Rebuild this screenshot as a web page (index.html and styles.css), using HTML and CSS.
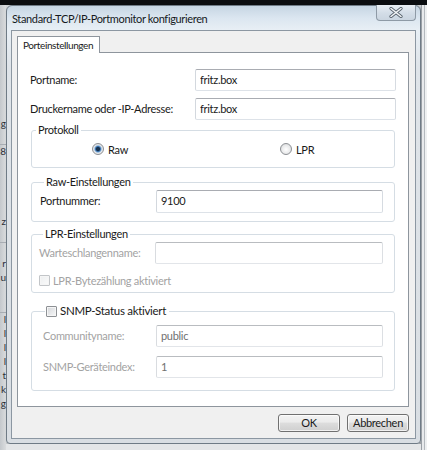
FILE: index.html
```html
<!DOCTYPE html>
<html lang="de">
<head>
<meta charset="utf-8">
<title>Standard-TCP/IP-Portmonitor konfigurieren</title>
<link rel="stylesheet" href="styles.css">
</head>
<body>
<div class="desk">
  <div class="topband"></div>
  <div class="leftstrip">
    <div class="li"></div><div class="li"></div><div class="li"></div><div class="li"></div>
    <div class="li"></div><div class="li"></div><div class="li"></div><div class="li"></div>
    <div class="li">g</div><div class="li sep"></div><div class="li">8</div><div class="li"></div>
    <div class="li"></div><div class="li"></div><div class="li"></div><div class="li">z</div>
    <div class="li sep"></div><div class="li"></div><div class="li">r</div><div class="li">u</div>
    <div class="li"></div><div class="li sep"></div><div class="li">l</div><div class="li">l</div>
    <div class="li">l</div><div class="li">l</div><div class="li">t</div><div class="li">k</div>
    <div class="li">g</div><div class="li"></div><div class="li"></div>
  </div>

  <div class="window">
    <div class="titlebar">
      <span class="title">Standard-TCP/IP-Portmonitor konfigurieren</span>
      <button class="close" type="button" aria-label="Schließen">
        <svg width="14" height="11" viewBox="0 0 14 11"><path d="M2 1.5 L12 9.5 M12 1.5 L2 9.5" stroke="#55606b" stroke-width="3.2" stroke-linecap="round"/><path d="M2 1.5 L12 9.5 M12 1.5 L2 9.5" stroke="#f4f6f8" stroke-width="1.6" stroke-linecap="round"/></svg>
      </button>
    </div>

    <div class="client">
      <div class="tabs"><div class="tab">Porteinstellungen</div></div>

      <div class="panel">
        <div class="row first">
          <label class="lbl">Portname:</label>
          <input class="field" type="text" value="fritz.box" spellcheck="false">
        </div>
        <div class="row">
          <label class="lbl">Druckername oder -IP-Adresse:</label>
          <input class="field" type="text" value="fritz.box" spellcheck="false">
        </div>

        <fieldset class="group g-proto">
          <legend>Protokoll</legend>
          <div class="radio-row">
            <label class="opt"><input type="radio" name="p" class="radio" checked> Raw</label>
            <label class="opt"><input type="radio" name="p" class="radio"> LPR</label>
          </div>
        </fieldset>

        <fieldset class="group g-raw">
          <legend>Raw-Einstellungen</legend>
          <div class="grow">
            <label class="lbl">Portnummer:</label>
            <input class="field tall" type="text" value="9100" spellcheck="false">
          </div>
        </fieldset>

        <fieldset class="group g-lpr">
          <legend>LPR-Einstellungen</legend>
          <div class="grow">
            <label class="lbl dis">Warteschlangenname:</label>
            <input class="field off" type="text" value="" readonly>
          </div>
          <label class="check dis"><input type="checkbox" class="box off" disabled> LPR-Bytezählung aktiviert</label>
        </fieldset>

        <fieldset class="group g-snmp">
          <legend><label class="check"><input type="checkbox" class="box"> SNMP-Status aktiviert</label></legend>
          <div class="grow wide">
            <label class="lbl dis">Communityname:</label>
            <input class="field off" type="text" value="public" readonly spellcheck="false">
          </div>
          <div class="grow wide second">
            <label class="lbl dis">SNMP-Geräteindex:</label>
            <input class="field off" type="text" value="1" readonly spellcheck="false">
          </div>
        </fieldset>
      </div>

      <div class="buttons">
        <button class="btn" type="button">OK</button>
        <button class="btn" type="button">Abbrechen</button>
      </div>
    </div>
  </div>

  <div class="rightstrip"></div>
  <div class="bottomstrip"></div>
</div>
</body>
</html>
```

FILE: styles.css
```css
* { box-sizing: border-box; }
html, body { margin: 0; padding: 0; }
body {
  width: 427px;
  height: 450px;
  overflow: hidden;
  background: #cfd3d6;
  font-family: Lato, "Open Sans", sans-serif;
  font-size: 11px;
  letter-spacing: -0.3px;
  color: #1a1a1a;
}
.desk {
  display: grid;
  grid-template-columns: 6px 415px 6px;
  grid-template-rows: 5px 439px 6px;
  width: 427px;
  height: 450px;
}
.topband { grid-column: 1 / 4; grid-row: 1; background: #0b0d10; }
.leftstrip {
  grid-column: 1; grid-row: 2 / 4;
  background: linear-gradient(90deg, #c4c8cc, #dadcde);
  overflow: hidden;
  display: flex; flex-direction: column;
}
.li {
  height: 14px; flex: none;
  display: flex; justify-content: flex-end;
  font-size: 10px; line-height: 13px; color: #2b2f36; letter-spacing: 0;
}
.li.sep { border-bottom: 1px solid #a8adb3; }
.rightstrip { grid-column: 3; grid-row: 2 / 4; background: linear-gradient(90deg, #9aa0a6 0 1px, #e8eaec 1px 3px, #b3b8bd 3px 4px, #eef0f1 4px); }
.bottomstrip { grid-column: 2; grid-row: 3; background: #e4e6e8; }

.window {
  grid-column: 2; grid-row: 2;
  display: flex; flex-direction: column;
  border: 1px solid #6f7b86;
  border-radius: 6px 6px 4px 4px;
  padding: 0 4px 4px 4px;
  background: linear-gradient(180deg, #c6d5e3 0px, #dbe6f0 12px, #e8eff5 24px, #dfe4e9 60px, #d9dee3 100%);
  box-shadow: 1px 1px 2px rgba(0,0,0,.35);
}
.titlebar {
  height: 24px; flex: none;
  display: flex; align-items: flex-start; justify-content: space-between;
}
.title {
  padding: 5px 0 0 1px;
  font-size: 11px; letter-spacing: -0.35px; color: #15191d; line-height: 16px;
}
.close {
  width: 40px; height: 16px;
  margin: -1px 0 0 0;
  padding: 0;
  border: 1px solid #8e9aa6;
  border-top: none;
  border-radius: 0 0 4px 4px;
  background: linear-gradient(180deg, #e8eef4, #d3dde7 55%, #cad5e0);
  display: flex; align-items: center; justify-content: center;
}

.client {
  flex: 1;
  display: flex; flex-direction: column;
  border: 1px solid #8c97a2;
  background: #f0f0f0;
  padding: 5px 6px 6px 5px;
}
.tabs { display: flex; flex: none; }
.tab {
  width: 83px; height: 17px;
  border: 1px solid #8e959d; border-bottom: none;
  background: #fff;
  padding: 0 0 0 5px;
  font-size: 10px; letter-spacing: -0.4px; line-height: 16px;
  white-space: nowrap;
  position: relative; z-index: 1;
}
.panel {
  flex: 1;
  margin-top: -1px;
  border: 1px solid #8e959d;
  background: #fff;
  padding: 16px 12px 0 12px;
}
.row {
  display: grid; grid-template-columns: 165px 1fr;
  align-items: center;
  height: 22px;
  margin-top: 7px;
}
.row.first { margin-top: 0; }
.lbl { white-space: nowrap; padding-bottom: 2px; }
.lbl.dis, .check.dis { color: #a3a3a3; }
.field {
  height: 22px; width: 100%;
  border: 1px solid;
  border-color: #a9acb2 #d6dbe1 #dde2e8 #d3d8de;
  border-radius: 2px;
  background: #fff;
  font: inherit; letter-spacing: inherit; color: #1a1a1a;
  padding: 0 4px 2px 4px;
  outline: none;
}
.field.tall { height: 23px; }
.field.off { color: #707070; border-color: #b9bcc0 #dcdfe3 #e2e5e9 #d9dce0; }

.group {
  margin: 0 1px;
  padding: 0;
  border: 1px solid #d5dde4;
  border-radius: 3px;
  min-width: 0;
}
.group legend {
  margin-left: 4px;
  padding: 0 2px;
  line-height: 14px;
  white-space: nowrap;
}
.g-proto { margin-top: 3px; padding: 5px 0 11px 0; }
.radio-row { display: flex; align-items: center; height: 14px; padding-left: 60px; }
.opt { display: flex; align-items: center; gap: 4px; }
.opt:first-child { width: 188px; }
.radio {
  -webkit-appearance: none; appearance: none;
  width: 12px; height: 12px; margin: 0;
  border: 1px solid #8d9094; border-radius: 50%;
  background: radial-gradient(circle at 50% 55%, #ffffff 0, #e9eaeb 55%, #cfd1d3 100%);
}
.radio:checked {
  background:
    radial-gradient(circle at 50% 50%, #17324f 0 1.6px, #3f78b3 2.6px, rgba(120,170,220,.5) 3.6px, transparent 4.2px),
    radial-gradient(circle at 50% 55%, #ffffff 0, #e9eaeb 55%, #cfd1d3 100%);
}

.g-raw { margin-top: 7px; padding: 1px 11px 8px 8px; }
.grow {
  display: grid; grid-template-columns: 116px 1fr;
  align-items: center;
}
.grow.wide { grid-template-columns: 113px 1fr; padding-left: 3px; }
.g-lpr { margin-top: 5px; padding: 1px 11px 5px 7px; }
.g-lpr .check { margin-top: 9px; height: 14px; }
.check { display: flex; align-items: center; gap: 3px; white-space: nowrap; }
.box {
  -webkit-appearance: none; appearance: none;
  width: 11px; height: 11px; margin: 0;
  border: 1px solid #8d9094; border-radius: 1px;
  background: linear-gradient(135deg, #d4d6d9, #f7f8f9);
  box-shadow: inset 0 0 0 1px #f5f5f5;
}
.box.off { border-color: #c2c5c8; background: linear-gradient(135deg, #eceeef, #fbfbfb); }
.g-snmp { margin-top: 11px; padding: 7px 11px 12px 8px; }
.g-snmp legend { margin-left: 5px; padding: 0 3px 0 1px; font-size: 11.5px; }
.grow.second { margin-top: 9px; }

.buttons {
  flex: none;
  display: flex; justify-content: flex-end; gap: 7px;
  margin-top: 7px;
}
.btn {
  width: 62px; height: 18px;
  padding: 0;
  border: 1px solid #707070;
  border-radius: 3px;
  background: linear-gradient(180deg, #f3f3f3 0%, #ebebeb 45%, #dddddd 50%, #cfcfcf 100%);
  box-shadow: inset 0 0 0 1px rgba(255,255,255,.7);
  font: inherit; letter-spacing: inherit; color: #1a1a1a;
  line-height: 16px;
}
```
